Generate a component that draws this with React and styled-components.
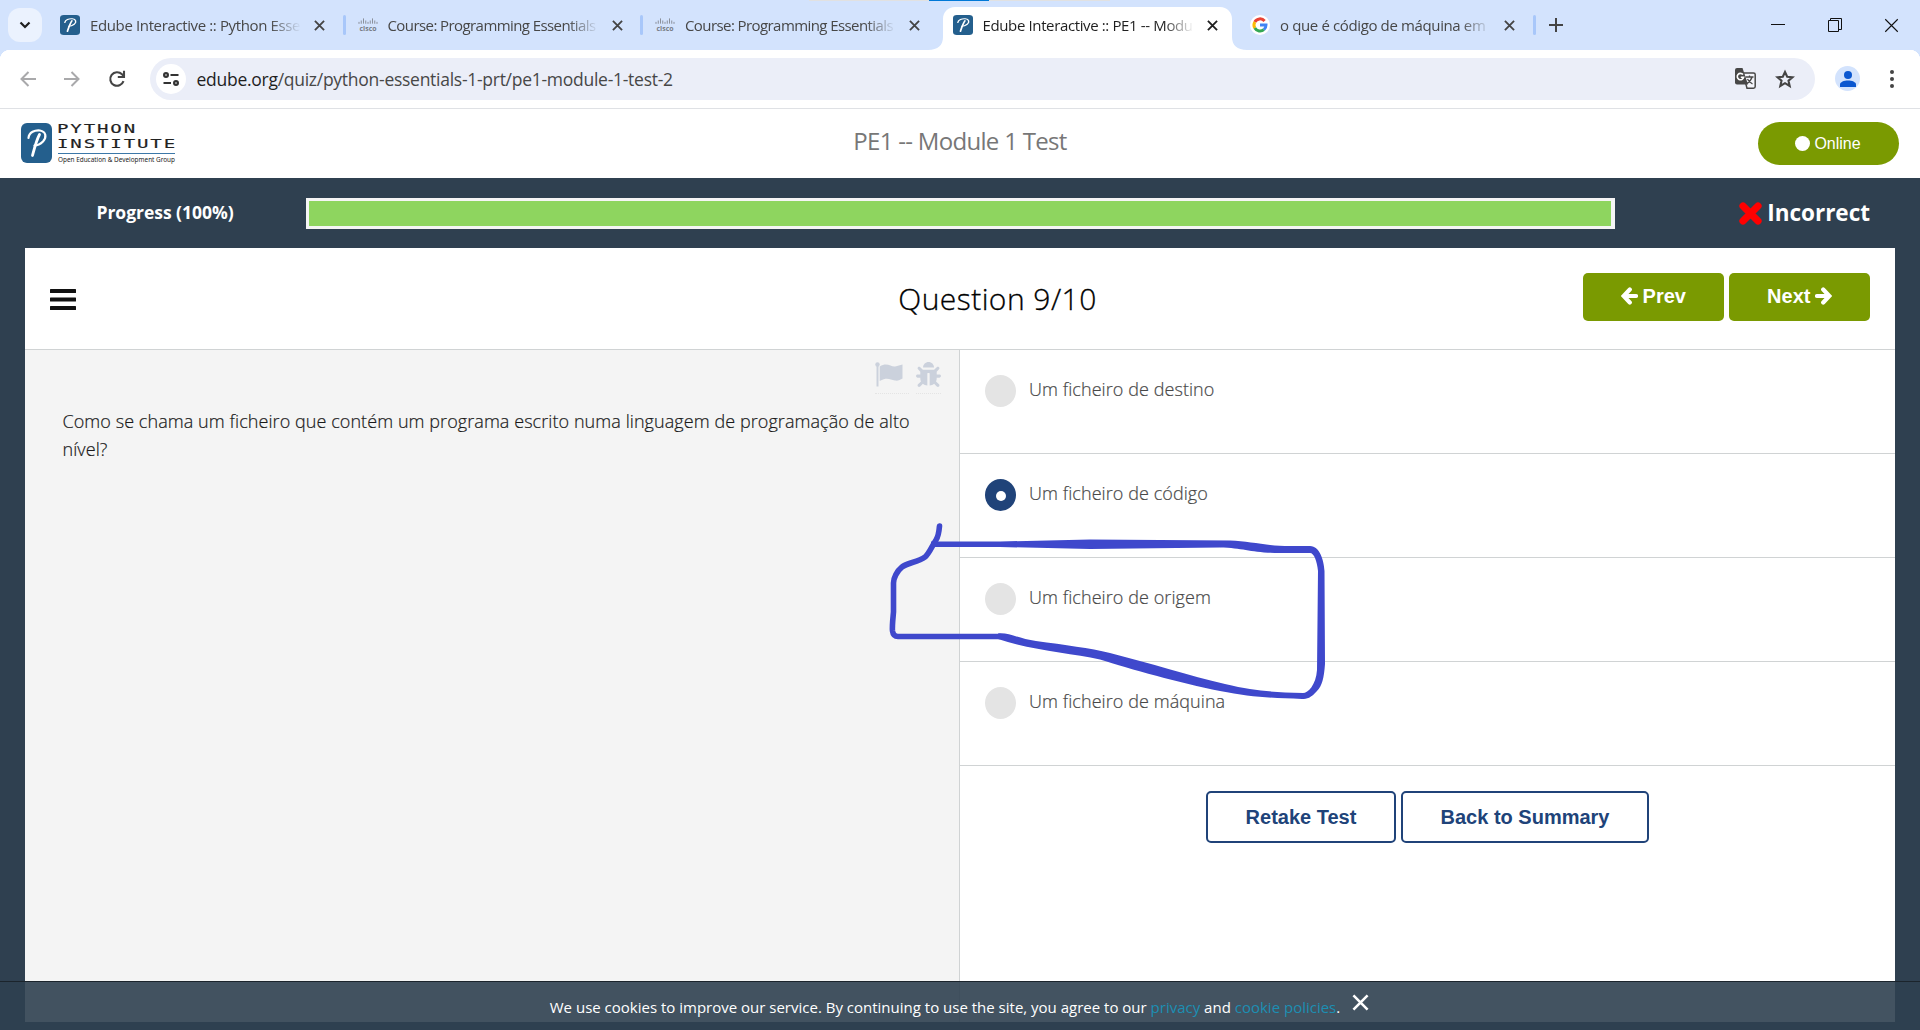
import React from "react";
import styled, { createGlobalStyle, css } from "styled-components";
import { FaBug } from "react-icons/fa";

const Global = createGlobalStyle`
  *, *::before, *::after { box-sizing: border-box; }
  body { margin: 0; overflow: hidden; font-family: "Open Sans", "Noto Sans", sans-serif; }
  button { font: inherit; border: 0; padding: 0; background: none; cursor: pointer; }
  svg { display: block; flex: none; }
`;

const Window = styled.div`
  position: relative;
  display: flex;
  flex-direction: column;
  width: 1920px;
  height: 1030px;
  overflow: hidden;
  background: #fff;
`;

/* Tab strip */
const TabStrip = styled.div`
  display: flex;
  flex: none;
  height: 50px;
  padding-left: 8px;
  background: #d3e3fd;
`;
const TabSearch = styled.button`
  display: grid;
  place-items: center;
  width: 34px;
  height: 34px;
  margin: 8px 5px 0 0;
  border-radius: 12px;
  background: #ebf2fe;
`;
const Tab = styled.div`
  position: relative;
  display: flex;
  align-items: center;
  width: 297.5px;
  height: 50px;
  padding: 0 13px;
`;
const ActiveShape = styled.svg`
  position: absolute;
  left: -12px;
  top: 7px;
`;
const Favicon = styled.span`
  position: relative;
  display: grid;
  place-items: center;
  width: 20px;
  height: 20px;
`;
const TabTitle = styled.span`
  position: relative;
  width: 211px;
  margin-left: 10px;
  white-space: nowrap;
  font-size: 15px;
  line-height: 22px;
  letter-spacing: ${(p) => p.$spacing || "-0.37px"};
  color: ${(p) => (p.$active ? "#1f1f1f" : "#474747")};
  mask-image: linear-gradient(90deg, #000 180px, transparent 211px);
`;
const TabClose = styled.button`
  position: relative;
  margin-left: 13px;
  height: 12px;
`;
const Separator = styled.i`
  position: absolute;
  right: -1px;
  top: 15px;
  width: 3px;
  height: 20px;
  border-radius: 2px;
  background: #a8c7fa;
`;
const NewTab = styled.button`
  display: grid;
  place-items: center;
  width: 42px;
  height: 50px;
`;
const WindowControls = styled.div`
  display: flex;
  align-items: center;
  gap: 42.5px;
  margin-left: auto;
  padding-right: 21px;
`;
const LoadStrip = styled.div`
  position: absolute;
  left: 809px;
  top: 0;
  width: 301px;
  height: 1px;
  background: linear-gradient(90deg, #e1e1e1 120px, #0078d7 120px 180px, #e1e1e1 180px);
`;

/* Address bar */
const Toolbar = styled.div`
  display: flex;
  align-items: center;
  flex: none;
  height: 59px;
  padding: 0 20px 1px 20px;
  border-bottom: 1px solid #dfe1e5;
  background: radial-gradient(circle at 10px 10px, #fff 10px, #d3e3fd 10.5px) 0 0 / 10px 10px no-repeat,
    radial-gradient(circle at 0 10px, #fff 10px, #d3e3fd 10.5px) 100% 0 / 10px 10px no-repeat, #fff;
`;
const NavButtons = styled.div`
  display: flex;
  align-items: center;
  gap: 28px;
  width: 130px;
`;
const AddressBar = styled.div`
  display: flex;
  align-items: center;
  width: 1665px;
  height: 42px;
  padding: 0 20px 0 6px;
  border-radius: 21px;
  background: #ebeef8;
`;
const SiteInfo = styled.span`
  display: grid;
  place-items: center;
  width: 30px;
  height: 30px;
  border-radius: 50%;
  background: #fff;
`;
const Url = styled.span`
  flex: 1;
  margin: 0 0 0 10.5px;
  font-size: 17.5px;
  letter-spacing: -0.27px;
  color: #474747;
  b { font-weight: 400; color: #1f1f1f; }
`;
const AddressIcons = styled.span`
  display: flex;
  align-items: center;
  gap: 19px;
`;
const Avatar = styled.span`
  display: grid;
  place-items: center;
  width: 25px;
  height: 25px;
  margin: 0 30px 0 20px;
  border-radius: 50%;
  background: #d3e3fd;
`;

/* Site header */
const SiteHeader = styled.header`
  display: grid;
  grid-template-columns: 1fr auto 1fr;
  align-items: center;
  flex: none;
  height: 69px;
  padding: 0 21px 0 21px;
`;
const Brand = styled.div`
  display: flex;
  gap: 6px;
  margin-bottom: 1px;
`;
const BrandLine = styled.text`
  font: 400 12.3px "DejaVu Sans Mono", monospace;
  fill: #222;
  stroke: #222;
  stroke-width: 0.15px;
`;
const BrandSub = styled.text`
  font: 400 7.5px "Noto Sans", sans-serif;
  fill: #222;
`;
const PageTitle = styled.h1`
  margin: 0;
  padding-bottom: 5px;
  font-size: 24px;
  line-height: 34px;
  font-weight: 400;
  letter-spacing: -0.7px;
  color: #777;
`;
const Online = styled.button`
  display: flex;
  align-items: center;
  justify-content: center;
  justify-self: end;
  gap: 4px;
  width: 141px;
  height: 43px;
  padding-right: 1px;
  border-radius: 22px;
  background: #7a9a01;
  color: #fff;
  font-family: "Liberation Sans", Arial, sans-serif;
  font-size: 16px;
  &::before {
    content: "";
    width: 15px;
    height: 15px;
    border-radius: 50%;
    background: #fff;
  }
`;

/* Quiz */
const Quiz = styled.main`
  display: flex;
  flex-direction: column;
  flex: 1;
  padding: 0 25px 8px;
  background: #2f4050;
`;
const ProgressRow = styled.div`
  display: flex;
  align-items: center;
  height: 70px;
  color: #fff;
  font-weight: 700;
`;
const ProgressLabel = styled.span`
  width: 281px;
  padding: 0 1px 2px 0;
  text-align: center;
  font-size: 17.5px;
  letter-spacing: -0.03px;
`;
const ProgressTrack = styled.div`
  width: 1309px;
  height: 31px;
  padding: 3px 4px 3px 3px;
  background: #f5f5f5;
`;
const ProgressFill = styled.div`
  width: 100%;
  height: 100%;
  background: #8ed55f;
`;
const Verdict = styled.span`
  display: flex;
  align-items: center;
  gap: 5.5px;
  margin-left: auto;
  padding: 0 25px 2px 0;
  font-size: 22.5px;
  letter-spacing: 0;
  svg { margin-top: 3px; }
`;
const Card = styled.section`
  display: flex;
  flex-direction: column;
  flex: 1;
  background: #fff;
`;
const CardHeader = styled.div`
  display: grid;
  grid-template-columns: 1fr auto 1fr;
  align-items: center;
  height: 102px;
  padding: 0 25px;
  border-bottom: 1px solid #d0d3d4;
`;
const QuestionTitle = styled.h2`
  margin: 0;
  padding-left: 75px;
  font-size: 30px;
  font-weight: 300;
  letter-spacing: 0.45px;
  color: #000;
  -webkit-text-stroke: 0.3px #000;
`;
const Pager = styled.div`
  display: flex;
  justify-content: flex-end;
  gap: 5px;
  padding-bottom: 3px;
`;
const PagerButton = styled.button`
  display: flex;
  align-items: center;
  justify-content: center;
  gap: 4.5px;
  width: 141px;
  height: 48px;
  border-radius: 5px;
  padding-bottom: 2px;
  background: #7a9a01;
  color: #fff;
  font: 700 20px "Liberation Sans", Arial, sans-serif;
`;
const Columns = styled.div`
  display: grid;
  grid-template-columns: 935px 1fr;
  flex: 1;
`;
const Prompt = styled.div`
  padding: 12px 18px 0 37px;
  border-right: 1px solid #d0d3d4;
  background: #f4f4f4;
`;
const PromptTools = styled.div`
  display: flex;
  justify-content: flex-end;
  gap: 7px;
`;
const Tool = styled.span`
  width: ${(p) => p.$width};
  height: 32px;
  border-bottom: 1px dotted #e4e4e4;
  color: #cbd1dc;
`;
const PromptText = styled.p`
  margin: 13px 0 0 0.5px;
  font-size: 18px;
  font-weight: 300;
  line-height: 28px;
  letter-spacing: 0.07px;
  color: #1a1a1a;
  -webkit-text-stroke: 0.2px #1a1a1a;
  span { display: block; white-space: nowrap; }
`;
const Option = styled.label`
  display: flex;
  align-items: flex-start;
  height: 104px;
  padding: 25px 26px 0 25px;
  border-bottom: 1px solid #d0d3d4;
`;
const Radio = styled.span`
  display: grid;
  place-items: center;
  width: 31px;
  height: 32px;
  border-radius: 50%;
  background: #e4e4e4;
  ${(p) => p.$checked && css`
    background: #204379;
    &::after {
      content: "";
      width: 10px;
      height: 10px;
      margin-top: 2px;
      border-radius: 50%;
      background: #fff;
    }
  `}
`;
const OptionText = styled.span`
  margin-left: 13px;
  font-size: 18px;
  font-weight: 300;
  line-height: 28px;
  letter-spacing: 0.07px;
  color: #484848;
  -webkit-text-stroke: 0.2px #484848;
`;
const Actions = styled.div`
  display: flex;
  justify-content: center;
  gap: 5px;
  padding: 25px 1px 0 0;
`;
const OutlineButton = styled.button`
  width: ${(p) => p.$width};
  height: 52px;
  padding-left: 1px;
  border: 2px solid #204379;
  border-radius: 5px;
  color: #204379;
  font: 700 20px "Liberation Sans", Arial, sans-serif;
`;

/* Overlays */
const CookieBar = styled.div`
  position: absolute;
  left: 0;
  bottom: 0;
  display: flex;
  justify-content: center;
  gap: 12px;
  width: 1920px;
  height: 49px;
  padding: 13px 1px 0 0;
  border-top: 1px solid #1b242c;
  background: rgba(47, 64, 80, 0.9);
  color: #fff;
  font-size: 15px;
  font-weight: 500;
  line-height: 24px;
  svg { margin-top: -1px; }
`;
const CookieLink = styled.a`
  color: #1c8fb3;
  font-weight: 400;
`;
const Scribble = styled.svg`
  position: absolute;
  left: 0;
  top: 0;
  pointer-events: none;
`;

const PMark = ({ width, height }) => (
  <svg width={width} height={height} viewBox="0 0 31 40" preserveAspectRatio="none">
    <rect width="31" height="40" rx="6" fill="#245f8d" />
    <path d="M7.500 15C8 9 14 7 19 7.500C25 8.500 26 14 22 18.500C19.500 21 16 22.500 13.500 22.500" fill="none" stroke="#fff" strokeWidth="2.200" strokeLinecap="round" />
    <path d="M18.500 11.500C15.500 17 14 23 11.500 32.500" fill="none" stroke="#fff" strokeWidth="2.800" strokeLinecap="round" />
  </svg>
);

const ciscoBars = [3, 5, 8, 5, 3, 5, 8, 5, 3];
const CiscoText = styled.text`
  font: 700 7.5px "Open Sans", sans-serif;
  fill: #777c85;
`;
const Cisco = () => (
  <svg width="20" height="14" viewBox="0 0 20 14">
    {ciscoBars.map((h, i) => (
      <rect key={i} x={0.5 + i * 2.25} y={6 - h * 0.7} width="1" height={h * 0.65} fill="#8a909b" />
    ))}
    <CiscoText x="1.500" y="13" textLength="17" lengthAdjust="spacingAndGlyphs">cisco</CiscoText>
  </svg>
);

const Google = () => (
  <svg width="20" height="20" viewBox="0 0 20 20">
    <circle cx="10" cy="10" r="10" fill="#fff" />
    <g fill="none" strokeWidth="3">
      <path d="M14.600 5.900A6 6 0 0 0 4.800 7" stroke="#ea4335" />
      <path d="M4.800 7A6 6 0 0 0 4.800 13" stroke="#fbbc05" />
      <path d="M4.800 13A6 6 0 0 0 13.900 14.600" stroke="#34a853" />
      <path d="M13.900 14.600A6 6 0 0 0 16 10H10" stroke="#4285f4" />
    </g>
  </svg>
);

const Cross = ({ size = 11, color = "#444", weight = 2 }) => (
  <svg width={size} height={size} viewBox="0 0 12 12">
    <path d="M1 1L11 11M11 1L1 11" stroke={color} strokeWidth={weight} />
  </svg>
);

const Arrow = ({ flip }) => (
  <svg width="16" height="16" viewBox="0 0 16 16" transform={flip ? "scale(-1 1)" : undefined}>
    <path d="M8.500 1L1.500 8L8.500 15M1.500 8H16" fill="none" stroke="#a9a9ab" strokeWidth="2" />
  </svg>
);

const BoldArrow = ({ flip }) => (
  <svg width="17" height="18" viewBox="0 0 17 18" transform={flip ? "scale(-1 1)" : undefined}>
    <path d="M8.800 2.500L2.600 9L8.800 15.500M3.500 9H15" fill="none" stroke="#fff" strokeWidth="4.200" strokeLinecap="round" strokeLinejoin="miter" />
  </svg>
);

const icons = { edube: <PMark width={20} height={20} />, cisco: <Cisco />, google: <Google /> };
const tabs = [
  { icon: "edube", title: "Edube Interactive :: Python Esse", line: true },
  { icon: "cisco", title: "Course: Programming Essentials", spacing: "-0.58px", line: true },
  { icon: "cisco", title: "Course: Programming Essentials", spacing: "-0.58px" },
  { icon: "edube", title: "Edube Interactive :: PE1 -- Modu", active: true },
  { icon: "google", title: "o que é código de máquina em", line: true },
];

const options = [
  { text: "Um ficheiro de destino" },
  { text: "Um ficheiro de código", checked: true },
  { text: "Um ficheiro de origem" },
  { text: "Um ficheiro de máquina" },
];

export default function App() {
  return (
    <Window>
      <Global />
      <TabStrip>
        <TabSearch>
          <svg width="12" height="8" viewBox="0 0 12 8"><path d="M1.500 1.500L6 6L10.500 1.500" fill="none" stroke="#1f1f1f" strokeWidth="2.200" /></svg>
        </TabSearch>
        {tabs.map((t, i) => (
          <Tab key={i}>
            {t.active && (
              <ActiveShape width="321" height="43" viewBox="0 0 321 43">
                <path d="M0 43C10 43 15 38 15 30V12C15 5 20 0 27 0H292C299 0 304 5 304 12V30C304 38 309 43 319 43Z" fill="#fff" />
              </ActiveShape>
            )}
            <Favicon>{icons[t.icon]}</Favicon>
            <TabTitle $active={t.active} $spacing={t.spacing}>{t.title}</TabTitle>
            <TabClose><Cross color={t.active ? "#1f1f1f" : "#444"} /></TabClose>
            {t.line && <Separator />}
          </Tab>
        ))}
        <NewTab>
          <svg width="14" height="14" viewBox="0 0 14 14"><path d="M7 0V14M0 7H14" stroke="#444" strokeWidth="2" /></svg>
        </NewTab>
        <WindowControls>
          <svg width="14" height="14" viewBox="0 0 14 14"><path d="M0 6.500H14" stroke="#111" /></svg>
          <svg width="14" height="14" viewBox="0 0 14 14"><path d="M.5 2.500H10.500V13.500H.5ZM2.500 2.500V.5H13.500V11.500H10.500" fill="none" stroke="#111" /></svg>
          <Cross size={15} color="#111" weight={0.9} />
        </WindowControls>
      </TabStrip>
      <LoadStrip />

      <Toolbar>
        <NavButtons>
          <Arrow />
          <Arrow flip />
          <svg width="18" height="18" viewBox="0 0 18 18">
            <path d="M15.500 11.200A6.800 6.800 0 1 1 14 4.300L16 6.300" fill="none" stroke="#444" strokeWidth="2.100" />
            <path d="M16 .8V7H9.800" fill="none" stroke="#444" strokeWidth="2.100" />
          </svg>
        </NavButtons>
        <AddressBar>
          <SiteInfo>
            <svg width="16" height="14" viewBox="0 0 16 14" fill="none" stroke="#333" strokeWidth="2.200">
              <circle cx="3" cy="3" r="1.900" /><path d="M7.500 3H15.500M0.500 11H8" /><circle cx="13" cy="11" r="1.900" />
            </svg>
          </SiteInfo>
          <Url><b>edube.org</b>/quiz/python-essentials-1-prt/pe1-module-1-test-2</Url>
          <AddressIcons>
            <svg width="21" height="21" viewBox="0 0 21 21">
              <path d="M8 5H18.500Q20.200 5 20.200 6.500V18.500Q20.200 20.200 18.500 20.200H12Z" fill="#f4f5fb" stroke="#474747" strokeWidth="1.500" />
              <path d="M2 0H7.500L13 16.500H2Q0 16.500 0 14.500V2Q0 0 2 0Z" fill="#474747" />
              <path d="M8 6.600A3.200 3.200 0 1 0 8.600 9.300H5.800" fill="none" stroke="#fff" strokeWidth="1.600" />
              <path d="M10.500 9H18.500M14.500 7.500V9M17 9Q16 13 12 15.500M12.500 11Q14 14 17.500 16" fill="none" stroke="#474747" strokeWidth="1.300" />
            </svg>
            <svg width="20" height="20" viewBox="0 0 20 20"><path d="M10 3L12.200 7.700L17.500 8.200L13.500 11.700L14.700 17L10 14.200L5.300 17L6.500 11.700L2.500 8.200L7.800 7.700Z" fill="none" stroke="#444" strokeWidth="2.100" /></svg>
          </AddressIcons>
        </AddressBar>
        <Avatar>
          <svg width="16" height="16" viewBox="0 0 16 16" fill="#0b57d0"><circle cx="8" cy="4" r="4" /><path d="M0 16V13.500C0 11 4 9.500 8 9.500S16 11 16 13.500V16Z" /></svg>
        </Avatar>
        <svg width="4" height="18" viewBox="0 0 4 18" fill="#444"><circle cx="2" cy="2" r="2" /><circle cx="2" cy="9" r="2" /><circle cx="2" cy="16" r="2" /></svg>
      </Toolbar>

      <SiteHeader>
        <Brand>
          <PMark width={31} height={40} />
          <svg width="124" height="40" viewBox="0 0 124 40" overflow="visible">
            <BrandLine x="-1" y="9.500" textLength="80" lengthAdjust="spacingAndGlyphs" letterSpacing="1.200">PYTHON</BrandLine>
            <BrandLine x="-1" y="25" textLength="120" lengthAdjust="spacingAndGlyphs" letterSpacing="1.200">INSTITUTE</BrandLine>
            <path d="M0 30.500H117" stroke="#3c78a8" />
            <BrandSub y="38.500" textLength="117" lengthAdjust="spacingAndGlyphs">Open Education &amp; Development Group</BrandSub>
          </svg>
        </Brand>
        <PageTitle>PE1 -- Module 1 Test</PageTitle>
        <Online>Online</Online>
      </SiteHeader>

      <Quiz>
        <ProgressRow>
          <ProgressLabel>Progress (100%)</ProgressLabel>
          <ProgressTrack><ProgressFill /></ProgressTrack>
          <Verdict>
            <svg width="23" height="23" viewBox="0 0 23 23"><path d="M4 4L19 19M19 4L4 19" stroke="#f00" strokeWidth="7.200" strokeLinecap="round" /></svg>
            Incorrect
          </Verdict>
        </ProgressRow>
        <Card>
          <CardHeader>
            <svg width="26" height="22" viewBox="0 0 26 22" fill="#111"><rect y="1" width="26" height="4" rx=".5" /><rect y="9.500" width="26" height="4" rx=".5" /><rect y="18" width="26" height="4" rx=".5" /></svg>
            <QuestionTitle>Question 9/10</QuestionTitle>
            <Pager>
              <PagerButton><BoldArrow />Prev</PagerButton>
              <PagerButton>Next<BoldArrow flip /></PagerButton>
            </Pager>
          </CardHeader>
          <Columns>
            <Prompt>
              <PromptTools>
                <Tool $width="34px">
                  <svg width="28" height="27" viewBox="0 0 28 27" fill="currentColor"><circle cx="2.500" cy="2.500" r="2.200" /><path d="M1.500 3H3.500V24.500H1.500ZM4.700 4.500C12 0 16 5 20 4.500C23 4 25 3.200 27.500 2.500V16.500C25 18 23 19 20 18.500C15 17.500 12 15 4.700 19Z" /></svg>
                </Tool>
                <Tool $width="25px"><FaBug size={25} /></Tool>
              </PromptTools>
              <PromptText>
                <span>Como se chama um ficheiro que contém um programa escrito numa linguagem de programação de alto</span>
                <span>nível?</span>
              </PromptText>
            </Prompt>
            <div>
              {options.map((o) => (
                <Option key={o.text}>
                  <Radio $checked={o.checked} />
                  <OptionText>{o.text}</OptionText>
                </Option>
              ))}
              <Actions>
                <OutlineButton $width="190px">Retake Test</OutlineButton>
                <OutlineButton $width="248px">Back to Summary</OutlineButton>
              </Actions>
            </div>
          </Columns>
        </Card>
      </Quiz>

      <CookieBar>
        <span>We use cookies to improve our service. By continuing to use the site, you agree to our <CookieLink>privacy</CookieLink> and <CookieLink>cookie policies</CookieLink>.</span>
        <Cross size={17} color="#fff" weight={1.800} />
      </CookieBar>

      <Scribble width="1920" height="1030" viewBox="0 0 1920 1030" fill="#3f48cc">
        <path fill="none" stroke="#3f48cc" strokeWidth="5.600" strokeLinecap="round" strokeLinejoin="round" d="M939.500 526C939 532 938 537 936 540C932 546 929 554 925 557C918 562 907 563 902 567C897 571 893.500 578 893.500 583V612C893 618 892 626 892.500 631C893 635 895 636.500 898 636.500H1000" />
        <path d="M931 541.500L1000 541.500L1090 539.500L1230 540.500C1250 541 1265 546 1290 546H1310C1320 546 1324 561 1324.500 571L1325 664C1324 678 1322 686 1317 691C1311 698 1307 699 1302 699C1270 698 1250 697 1220 691C1180 683 1130 669 1100 659.500C1070 653 1030 650 998 639V633.500C1008 632 1020 639 1036 641C1065 645 1090 648 1110 653C1150 663 1190 676 1225 684C1255 691 1270 692 1303 693C1308 693 1316 685 1317 670L1318 571C1317 561 1314 553 1310 553H1280C1250 553 1245 548 1220 547.500L1090 549L1000 547L931 547Z" />
      </Scribble>
    </Window>
  );
}
